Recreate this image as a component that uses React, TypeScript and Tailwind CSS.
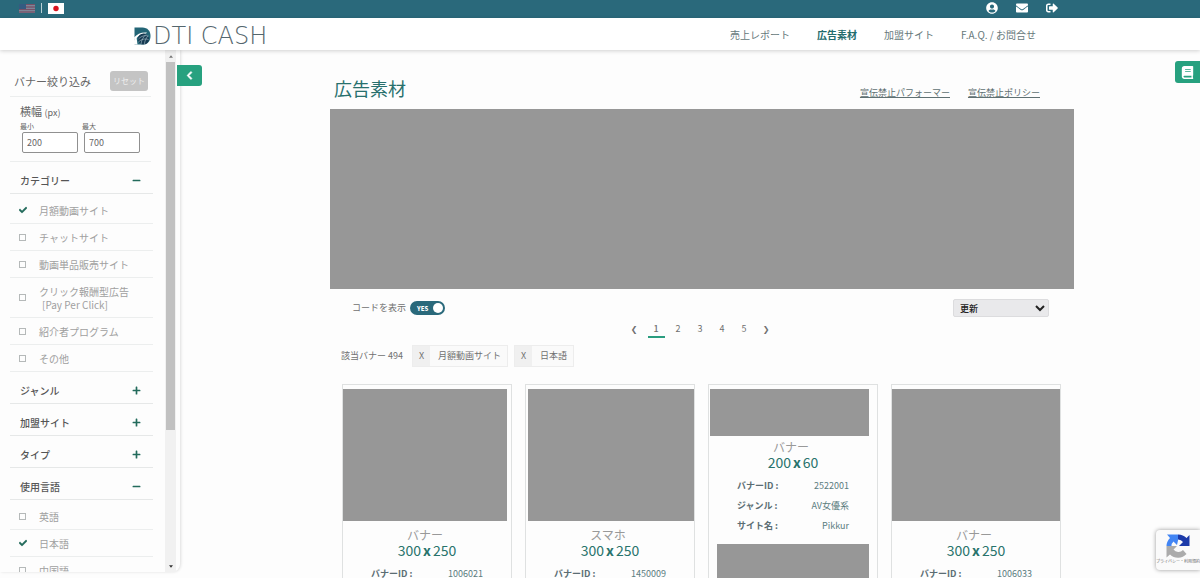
import { useState } from "react";
import {
  FaBook,
  FaCheck,
  FaChevronLeft,
  FaEnvelope,
  FaMinus,
  FaPlus,
  FaSignOutAlt,
  FaUserCircle,
} from "react-icons/fa";

const CATEGORIES = [
  { label: "月額動画サイト", on: true },
  { label: "チャットサイト" },
  { label: "動画単品販売サイト" },
  { label: "クリック報酬型広告", sub: "[Pay Per Click]" },
  { label: "紹介者プログラム" },
  { label: "その他" },
];

const LANGUAGES = [{ label: "英語" }, { label: "日本語", on: true }, { label: "中国語" }];

const NAV = ["売上レポート", "広告素材", "加盟サイト", "F.A.Q. / お問合せ"];

type Banner = {
  kind: string;
  w: number;
  h: number;
  id: string;
  genre: string;
  site: string;
  image: string;
  extra?: boolean;
};

const BANNERS: Banner[] = [
  { kind: "バナー", w: 300, h: 250, id: "1006021", genre: "AV女優系", site: "Pikkur", image: "mr-1 h-[132px] mb-[3px]" },
  { kind: "スマホ", w: 300, h: 250, id: "1450009", genre: "AV女優系", site: "Pikkur", image: "ml-0.5 h-[132px] mb-[3px]" },
  { kind: "バナー", w: 200, h: 60, id: "2522001", genre: "AV女優系", site: "Pikkur", image: "ml-px mr-2 h-[47px]", extra: true },
  { kind: "バナー", w: 300, h: 250, id: "1006033", genre: "AV女優系", site: "Pikkur", image: "h-[132px] mb-[3px]" },
];

function Logo() {
  return (
    <a href="#" className="flex items-center pt-1 text-[#54666d]">
      <svg viewBox="0 0 34 36" className="h-[18px] w-[17px]" aria-hidden="true">
        <path d="M1 1h16c10 0 16 7 16 17s-6 17-16 17H1z" fill="#236576" />
        <path d="M0 21C6 14 15 10 26 11l-2 2C14 13 6 19 1 28z" fill="#fff" />
        <path d="M0 27c2-2 3-5 5-7l2 15H0z" fill="#fff" />
        <circle cx="19" cy="24" r="11" fill="#173a52" />
        <path
          d="M9 24c6-6 12-8 20-6M9 30c6-6 13-7 20-5M14 34c1-8 5-15 10-19M21 35c0-7 3-13 7-17"
          fill="none"
          stroke="#b9d2d9"
          strokeWidth="1.1"
        />
      </svg>
      <span className="pl-0.5 font-['DejaVu_Sans',sans-serif] text-[24px] leading-5 font-extralight">DTI CASH</span>
    </a>
  );
}

function SectionHead({ title, open }: { title: string; open?: boolean }) {
  return (
    <button
      type="button"
      aria-expanded={!!open}
      className="flex h-8 w-full items-center justify-between border-b border-[#e6e8e8] pt-1.5 pr-3 pl-2.5 text-[10px] font-medium text-[#555]"
    >
      {title}
      {open ? <FaMinus className="size-[9px] text-[#236b5c]" /> : <FaPlus className="size-[9px] text-[#236b5c]" />}
    </button>
  );
}

function CheckList({ items }: { items: { label: string; sub?: string; on?: boolean }[] }) {
  return (
    <ul className="pt-[3px]">
      {items.map((item) => (
        <li key={item.label} className="border-b border-[#eceeee]">
          <label
            className={`flex items-center gap-3 pl-2 text-[10px] leading-[13px] text-[#a0a0a0] ${item.sub ? "h-[39px]" : "h-[26px]"}`}
          >
            <span className="grid w-[9px] place-items-center">
              <input
                type="checkbox"
                defaultChecked={item.on}
                className="peer col-start-1 row-start-1 size-[7px] appearance-none border border-[#b5b9b9] checked:border-transparent"
              />
              <FaCheck
                className="pointer-events-none col-start-1 row-start-1 hidden size-2 text-[#236b5c] peer-checked:block"
                stroke="currentColor"
                strokeWidth="40"
              />
            </span>
            <span>
              {item.label}
              {item.sub && <span className="block pl-[3px]">{item.sub}</span>}
            </span>
          </label>
        </li>
      ))}
    </ul>
  );
}

function Sidebar() {
  return (
    <aside className="flex h-full w-[180px] shrink-0 rounded-br-lg bg-[#fdfdfd] shadow-[1px_0_3px_rgba(0,0,0,0.12)]">
      <div className="h-full flex-1 overflow-hidden pl-2.5">
        <div className="mr-3.5 flex h-[47px] items-end justify-between border-b border-[#eceeee] pb-[5px] pl-1">
          <h2 className="pb-0.5 text-[11px] leading-4 text-[#666]">バナー絞り込み</h2>
          <button type="button" className="mr-[3px] h-5 w-[38px] rounded-[3px] bg-[#c4c4c4] text-[8px] text-[#eee]">
            リセット
          </button>
        </div>
        <div className="mr-3.5 h-[65px] border-b border-[#eceeee] pt-[7px] pl-2.5 text-[#666]">
          <p className="text-[11px] leading-3.5">
            横幅 <span className="text-[9px]">(px)</span>
          </p>
          <div className="flex gap-1">
            {[
              ["最小", "200"],
              ["最大", "700"],
            ].map(([label, value]) => (
              <label key={label} className="text-[7px] leading-3">
                <span className="block">{label}</span>
                <input
                  type="text"
                  defaultValue={value}
                  className="ml-0.5 block h-[21px] w-[56px] rounded-[2px] border border-[#909090] bg-white pl-1 text-[9px] text-[#666]"
                />
              </label>
            ))}
          </div>
        </div>
        <div className="mr-3">
          <SectionHead title="カテゴリー" open />
          <CheckList items={CATEGORIES} />
          <SectionHead title="ジャンル" />
          <SectionHead title="加盟サイト" />
          <SectionHead title="タイプ" />
          <SectionHead title="使用言語" open />
          <CheckList items={LANGUAGES} />
        </div>
      </div>
      <div aria-hidden="true" className="mr-1 flex w-[11px] flex-col items-center bg-[#f1f1f1]">
        <span className="flex h-3 items-center">
          <svg viewBox="0 0 6 4" className="h-[3px] w-1"><path d="M0 4 3 0l3 4z" fill="#777" /></svg>
        </span>
        <span className="h-[368px] w-[9px] bg-[#c1c1c1]" />
        <span className="mt-auto flex h-3 items-center">
          <svg viewBox="0 0 6 4" className="h-[3px] w-1"><path d="M0 0h6L3 4z" fill="#333" /></svg>
        </span>
      </div>
    </aside>
  );
}

function BannerCard({ banner }: { banner: Banner }) {
  const rows = [
    ["バナーID :", banner.id],
    ["ジャンル :", banner.genre],
    ["サイト名 :", banner.site],
  ];
  return (
    <article className="h-[260px] overflow-hidden border border-[#dfe1e1] pt-1">
      <div className={`bg-[#979797] ${banner.image}`} />
      <h3 className="pt-1 text-center text-[14px] leading-4 text-[#28736c]">
        <span className="block pr-1 text-[12px] leading-3.5 text-[#999]">{banner.kind}</span>
        {banner.w}
        <b className="px-0.5 font-bold">x</b>
        {banner.h}
      </h3>
      <dl className="px-7 pt-1.5 text-[9px] leading-5">
        {rows.map(([term, value]) => (
          <div key={term} className="flex justify-between">
            <dt className="font-bold text-[#5b6d73]">{term}</dt>
            <dd className="text-[#5a7c7e]">{value}</dd>
          </div>
        ))}
      </dl>
      {banner.extra && <div className="mt-2 mr-2 ml-2 h-20 bg-[#979797]" />}
    </article>
  );
}

function Recaptcha() {
  return (
    <div className="absolute right-0 bottom-2 flex h-10 w-11 flex-col items-center rounded-l-sm bg-[#fafafa] pt-1 shadow-[0_0_4px_rgba(0,0,0,0.4)]">
      <svg viewBox="0 0 48 48" className="size-6" aria-hidden="true">
        <path d="M24 1a23 23 0 0 1 17 7l6-6v22H26l8-8a12 12 0 0 0-10-5z" fill="#1c3aa9" />
        <path d="M24 1v12l-2 9-7-7a12 12 0 0 0-4 9H1A23 23 0 0 1 8 8L2 1z" fill="#4285f4" />
        <path d="M1 24h21l-7 7a12 12 0 0 0 19 1l7 8A23 23 0 0 1 8 41l-7 6z" fill="#ababab" />
      </svg>
      <span className="text-[4px] leading-[6px] whitespace-nowrap text-[#666]">プライバシー・利用規約</span>
    </div>
  );
}

export default function App() {
  const [showCode, setShowCode] = useState(true);

  return (
    <div className="relative flex h-screen flex-col overflow-hidden bg-[#fdfdfd] font-['Noto_Sans_CJK_JP',sans-serif] text-[#707070]">
      <div className="flex h-[18px] shrink-0 items-center justify-between bg-[#2a697b] pr-[142px] pb-0.5 pl-[19px] text-white">
        <div className="flex items-center gap-1.5">
          <button type="button" aria-label="English" className="opacity-50">
            <svg viewBox="0 0 16 9" className="h-[9px] w-4">
              <path d="M0 0h16v9H0z" fill="#d8c5d0" />
              <path d="M0 .5h16M0 3h16M0 5.500h16M0 8h16" stroke="#c23b55" strokeWidth="1.3" />
              <path d="M0 0h7v5H0z" fill="#3f4f88" />
            </svg>
          </button>
          <span className="h-2.5 w-px bg-[#b9d0d6]" />
          <button type="button" aria-label="日本語">
            <svg viewBox="0 0 16 11" className="h-[11px] w-4">
              <path d="M0 0h16v11H0z" fill="#fff" />
              <circle cx="8" cy="5.500" r="2.700" fill="#d8121f" />
            </svg>
          </button>
        </div>
        <div className="flex items-center gap-[18px]">
          <a href="#" aria-label="アカウント"><FaUserCircle className="size-3" /></a>
          <a href="#" aria-label="メール"><FaEnvelope className="size-3" /></a>
          <a href="#" aria-label="ログアウト"><FaSignOutAlt className="size-3" /></a>
        </div>
      </div>

      <header className="z-10 flex h-8 shrink-0 items-center justify-between bg-white pr-[164px] pl-[134px] shadow-[0_1px_4px_rgba(0,0,0,0.18)]">
        <Logo />
        <nav className="flex gap-[27px] text-[10px]">
          {NAV.map((item) => (
            <a key={item} href="#" className={item === "広告素材" ? "font-bold text-[#236b6c]" : "text-[#66787a]"}>
              {item}
            </a>
          ))}
        </nav>
      </header>

      <div className="flex min-h-0 flex-1">
        <div className="pb-1.5">
          <Sidebar />
        </div>
        <main className="min-w-0 flex-1 pr-[126px] pl-[150px]">
          <div className="flex items-center justify-between pt-6 pr-[34px] pb-1.5 pl-1">
            <h1 className="text-[18px] leading-[29px] text-[#28706d]">広告素材</h1>
            <div className="flex gap-[18px] pt-2 text-[9px] leading-4 text-[#5f7072] underline">
              <a href="#">宣伝禁止パフォーマー</a>
              <a href="#">宣伝禁止ポリシー</a>
            </div>
          </div>
          <div className="h-[180px] bg-[#979797]" />

          <div className="flex items-center justify-between pt-2.5 pr-[25px] pl-[22px]">
            <label className="flex items-center gap-1 text-[9px]">
              コードを表示
              <span className="grid h-3.5 w-[35px] items-center rounded-full bg-[#2a697b]">
                <input
                  type="checkbox"
                  checked={showCode}
                  onChange={(e) => setShowCode(e.target.checked)}
                  className="peer col-start-1 row-start-1 h-3.5 w-[35px] appearance-none"
                />
                <span className="pointer-events-none col-start-1 row-start-1 flex items-center justify-between pr-0.5 pl-[7px] text-[6px] font-black text-white">
                  {showCode ? "YES" : "NO"}
                  <span className="size-2.5 rounded-full bg-white" />
                </span>
              </span>
            </label>
            <select
              aria-label="並び順"
              className="h-[18px] w-24 rounded-[2px] border border-[#dcdcde] bg-[#e9e9eb] pl-0.5 text-[9px] font-medium text-[#222]"
            >
              <option>更新</option>
            </select>
          </div>

          <nav aria-label="ページ" className="flex justify-center pt-1 pr-1 text-[9px] leading-[15px]">
            <button type="button" className="w-[22px] font-['DejaVu_Sans',sans-serif] text-[8px]">❮</button>
            {[1, 2, 3, 4, 5].map((n) => (
              <a key={n} href="#" className="flex w-[22px] justify-center">
                <span className={n === 1 ? "w-[17px] border-b-2 border-[#2a9d7f] text-center font-medium" : ""}>{n}</span>
              </a>
            ))}
            <button type="button" className="w-[22px] font-['DejaVu_Sans',sans-serif] text-[8px]">❯</button>
          </nav>

          <div className="flex items-center gap-1.5 pt-[7px] pl-[11px] text-[9px]">
            <span className="pr-[3px]">該当バナー 494</span>
            {["月額動画サイト", "日本語"].map((tag) => (
              <span key={tag} className="flex h-[22px] items-center border border-[#ededed] bg-[#fafafa] pr-1.5">
                <button type="button" aria-label={`${tag}を外す`} className="mr-2 h-full w-[17px] bg-[#f0f0f0]">X</button>
                {tag}
              </span>
            ))}
          </div>

          <div className="grid grid-cols-4 gap-[13px] pt-[17px] pr-[13px] pl-3">
            {BANNERS.map((banner) => (
              <BannerCard key={banner.id} banner={banner} />
            ))}
          </div>
        </main>
      </div>

      <button
        type="button"
        aria-label="絞り込みを閉じる"
        className="absolute top-[65px] left-[177px] z-10 flex h-[21px] w-[25px] items-center justify-center rounded-r-[3px] bg-[#27a17f] text-white"
      >
        <FaChevronLeft className="size-[9px]" stroke="currentColor" strokeWidth="40" />
      </button>
      <button
        type="button"
        aria-label="マニュアル"
        className="absolute top-[61px] right-0 flex h-[22px] w-[25px] items-center justify-center rounded-l-[3px] bg-[#27a17f] text-white"
      >
        <FaBook className="size-[13px]" />
      </button>
      <Recaptcha />
    </div>
  );
}
